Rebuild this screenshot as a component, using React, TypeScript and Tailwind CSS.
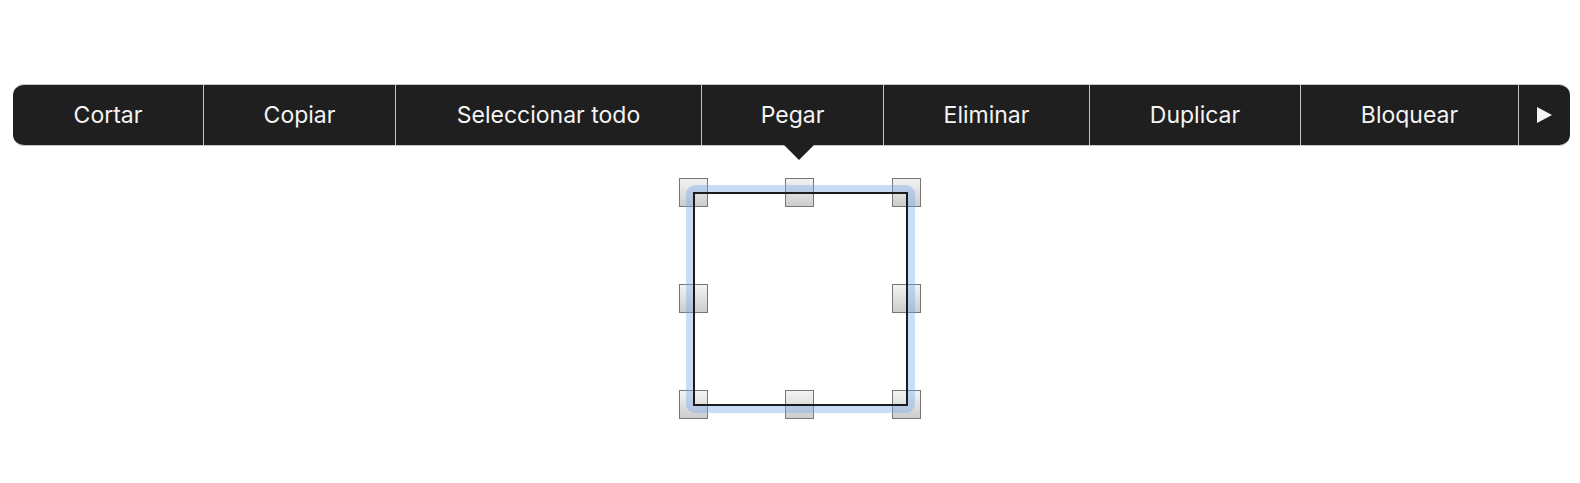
import React from 'react';

const items = [
  { label: 'Cortar', w: 'w-[190px]' },
  { label: 'Copiar', w: 'w-[192px]' },
  { label: 'Seleccionar todo', w: 'w-[306px]' },
  { label: 'Pegar', w: 'w-[182px]' },
  { label: 'Eliminar', w: 'w-[206px]' },
  { label: 'Duplicar', w: 'w-[211px]' },
  { label: 'Bloquear', w: 'w-[218px]' },
];

// handle positions inside the selection canvas (top-left of each 29px handle)
const handles = [
  'left-[0px] top-[0px]',
  'left-[106px] top-[0px]',
  'left-[213px] top-[0px]',
  'left-[0px] top-[106px]',
  'left-[213px] top-[106px]',
  'left-[0px] top-[212px]',
  'left-[106px] top-[212px]',
  'left-[213px] top-[212px]',
];

function EditMenu() {
  return (
    <div className="relative ml-[13px] flex h-[62px] w-[1557px] rounded-[11px] border-y border-[#c9c9c9] bg-[#1f1f1f] text-[23px] text-[#f4f4f4]">
      {items.map((it, i) => (
        <div
          key={it.label}
          className={`${it.w} flex shrink-0 items-center justify-center ${i > 0 ? 'border-l border-[#c4c4c4]' : ''}`}
        >
          {it.label}
        </div>
      ))}
      <div className="flex w-[52px] shrink-0 items-center justify-center border-l border-[#c4c4c4]">
        <svg width="17" height="16" viewBox="0 0 17 16">
          <path d="M1 0 L16 8 L1 16 Z" fill="#f4f4f4" />
        </svg>
      </div>
      {/* popover pointer */}
      <svg className="absolute left-[771px] top-full" width="30" height="16" viewBox="0 0 30 16">
        <path d="M0 0 L30 0 L15 15 Z" fill="#1f1f1f" />
      </svg>
    </div>
  );
}

function Selection() {
  return (
    <div className="relative ml-[679px] mt-[32px] h-[241px] w-[242px]">
      {handles.map((pos) => (
        <div
          key={pos}
          className={`absolute ${pos} h-[29px] w-[29px] border border-[#767676] bg-gradient-to-b from-[#f3f3f3] to-[#cdcdcd]`}
        />
      ))}
      <div className="absolute left-[7px] top-[7px] h-[228px] w-[229px] rounded-[9px] border-[7px] border-[rgba(120,170,240,0.4)]" />
      <div className="absolute left-[14px] top-[14px] h-[214px] w-[215px] border-2 border-[#1c1c1c]" />
    </div>
  );
}

export default function App() {
  return (
    <div className="h-[483px] w-[1580px] overflow-hidden bg-white pt-[84px]" style={{ fontFamily: 'Inter, "Liberation Sans", sans-serif' }}>
      <EditMenu />
      <Selection />
    </div>
  );
}
